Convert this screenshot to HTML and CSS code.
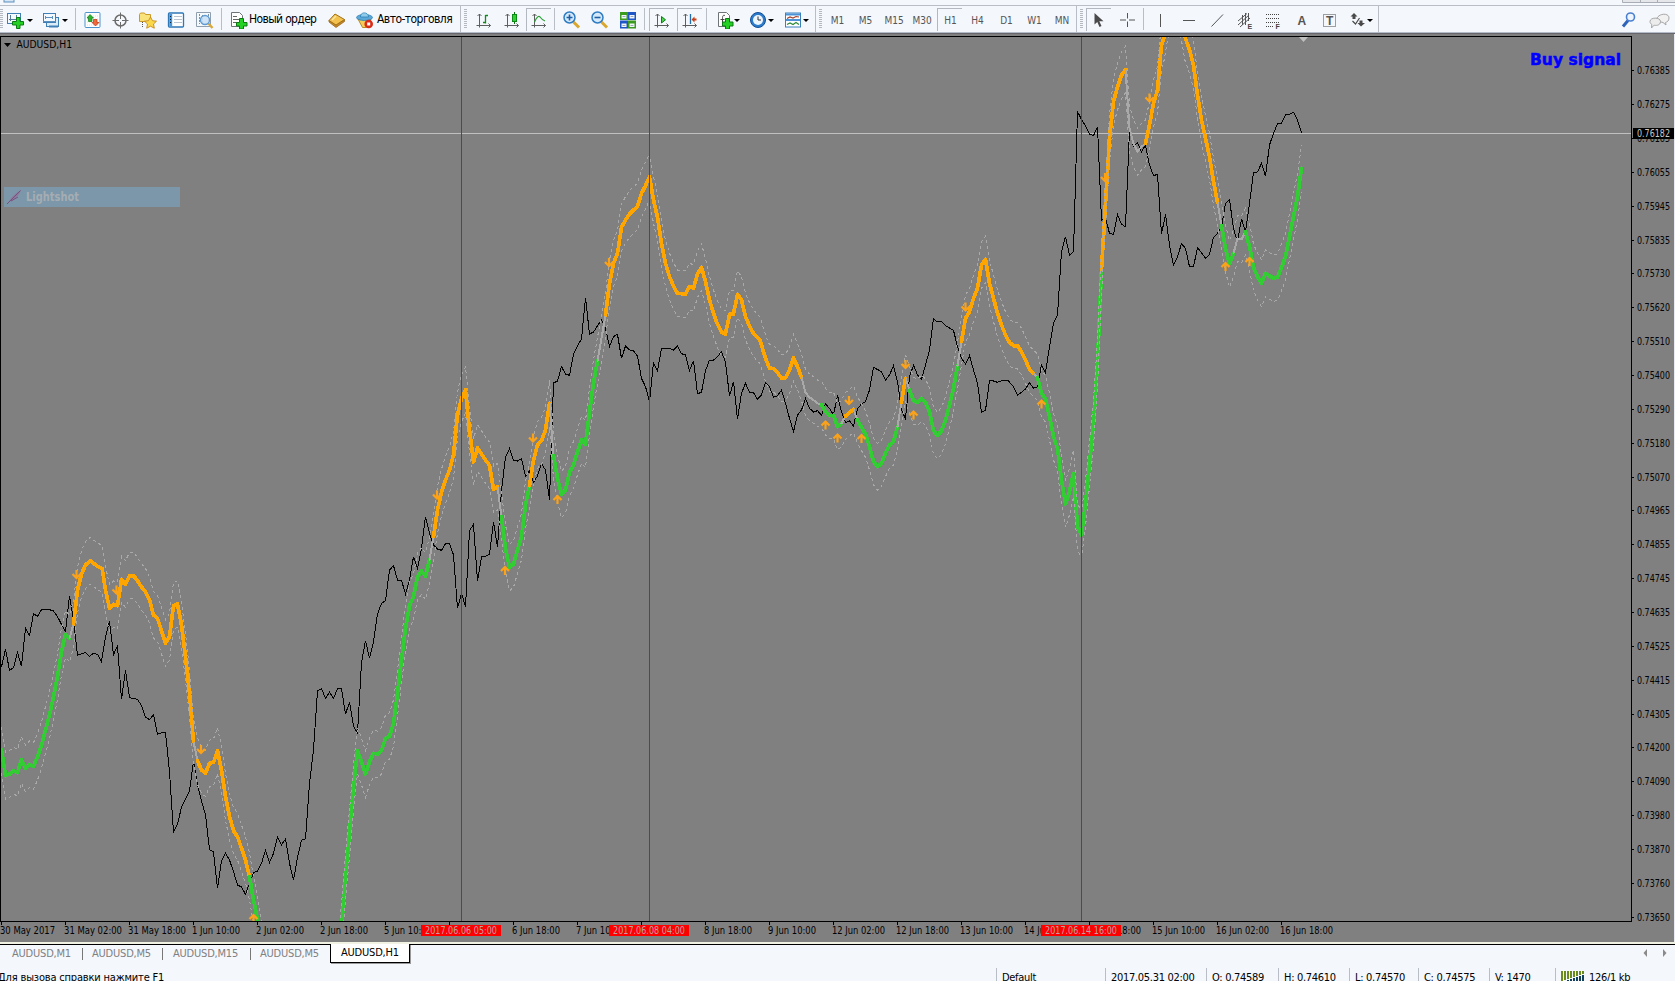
FILE: index.html
```html
<!DOCTYPE html>
<html lang="ru">
<head>
<meta charset="utf-8">
<title>AUDUSD,H1</title>
<link rel="stylesheet" href="styles.css">
</head>
<body>
<div class="app">
  <div class="menu-strip">
    <svg width="20" height="5" viewBox="0 0 20 5"><rect x="4" y="-8" width="10" height="10" fill="#d6e6f4" stroke="#5b8fc0"/></svg>
    <svg class="win-buttons" width="53" height="5" viewBox="0 0 53 5"><path d="M0 0H53V2.5H0Z" fill="#e4e6ea"/><path d="M.5 0V2.5H53M18.500 0V2M35.500 0V2" fill="none" stroke="#a9adb5"/></svg>
  </div>

  <div class="toolbar">
    <span class="grip"></span>
    <svg class="ic m3" viewBox="0 0 18 18"><rect x="1.500" y="2.500" width="13" height="10" fill="#f4f9fd" stroke="#3f7fb5"/><path d="M4.500 4v6M3 8.500h9M10.500 4v4" stroke="#55799a" fill="none"/><path d="M10.500 6.500h3.500v4h3.500v3.500H14v3.500h-3.500v-3.500H6.500v-3.500h4Z" fill="#25d025" stroke="#0c7a14"/></svg>
    <i class="dd m3"></i>
    <svg class="ic m9" viewBox="0 0 18 18"><rect x="4.500" y="6.500" width="12" height="9" fill="#dcebf8" stroke="#3f7fb5"/><path d="M7 15.500h9" stroke="#3f7fb5" stroke-width="2"/><rect x="1.500" y="2.500" width="12" height="9" fill="#f4f9fd" stroke="#3f7fb5"/><path d="M3.500 5v3M3 6.500h8M10.500 5v3M1 10.500h13" stroke="#5a8fbe" fill="none"/></svg>
    <i class="dd m2"></i>
    <i class="sep m7"></i>
    <svg class="ic m8" viewBox="0 0 18 18"><rect x="1" y="1.500" width="15" height="15" rx="1" fill="#fff" stroke="#4e92cc"/><path d="M3 5h11M3 8h11M3 11h11M3 14h11" stroke="#d8dfe6" stroke-dasharray="1 1"/><path d="M6 3.500l3.500 3.500H8v3.500H4.500V7H3Z" fill="#2cb52c" stroke="#0f7a12" stroke-width=".7"/><path d="M11.500 15l-3.500-3.500h1.500v-3h3.500v3H15Z" fill="#f0693a" stroke="#b93212" stroke-width=".7"/></svg>
    <svg class="ic m10" viewBox="0 0 18 18"><circle cx="8.500" cy="9.500" r="5.500" fill="none" stroke="#6c6c6c" stroke-width="1.500"/><path d="M8.500 1.500v6.500M8.500 11v6.500M.5 9.500h6.500M10 9.500h6.500" stroke="#6c6c6c"/></svg>
    <svg class="ic m9" viewBox="0 0 18 18"><path d="M.5 3.500l1-1.500h4l1 1.500h5v7H.5Z" fill="#f9e27a" stroke="#c99a2a"/><path d="M3.500 11v6" stroke="#555" stroke-dasharray="1 1"/><path d="M11.500 6l2 3.700 4 .5-3 2.800.8 4.200-3.800-2-3.800 2 .8-4.200-3-2.800 4-.5Z" fill="#fbd84a" stroke="#c48a1c" stroke-width=".9"/></svg>
    <svg class="ic m10" viewBox="0 0 18 18"><rect x="1.500" y="2" width="15" height="14" rx="1" fill="#fff" stroke="#2f78b8" stroke-width="1.300"/><path d="M3.700 3v12.500" stroke="#4b93d6" stroke-width="3"/><path d="M7 5.500h8M7 8.500h8M7 11.500h8" stroke="#b9c4cf"/><path d="M3 5.500h1M3 8.500h1M3 11.500h1" stroke="#123"/></svg>
    <svg class="ic m11" viewBox="0 0 18 18"><path d="M.5 1.500h14v14H.5Z" fill="#f6f9fc" stroke="#8f9fae"/><path d="M3.500 3v10M6.500 4v9M12.500 3v4" stroke="#7990a6" stroke-dasharray="2 1"/><path d="M12.500 12.500l4 4.500" stroke="#d9a93c" stroke-width="2.500"/><circle cx="9" cy="9" r="4.500" fill="#c9e1f6" fill-opacity=".85" stroke="#5f9bd2" stroke-width="1.400"/></svg>
    <i class="sep m7"></i>
    <svg class="ic m8" viewBox="0 0 18 18"><path d="M1.500 1.500h8l3 3v11h-11Z" fill="#fff" stroke="#6f7478"/><path d="M3 5.500h4M3 8.500h6M3 11.500h4" stroke="#666"/><path d="M9.500 7.500h4v4H17v3.500h-3.500v3h-4v-3H6.500v-3.500h3Z" fill="#25d025" stroke="#0c7a14"/></svg>
    <span class="cmd order m1">Новый ордер</span>
    <svg class="ic m10" viewBox="0 0 18 18"><path d="M1 11l7 5.500 8.500-6v-2L8 14 1 9Z" fill="#c98a22" stroke="#8c5c12" stroke-width=".7"/><path d="M1 9.500L7 3l9.500 5.500L8 14Z" fill="#f3c24e" stroke="#a26f18"/><path d="M4 9l4-4" stroke="#fbe7a4" stroke-width="1.500"/></svg>
    <svg class="ic m10" viewBox="0 0 18 18"><path d="M2 8h13l-4.500 8.500H6.500Z" fill="#f4cd58" stroke="#b98a20"/><ellipse cx="8.500" cy="6.500" rx="8" ry="3" fill="#5ba8d8" stroke="#2f7fb2" stroke-width=".8"/><path d="M4.500 6C4 .5 12.500 .5 12.500 6Z" fill="#8fccec" stroke="#2f7fb2" stroke-width=".8"/><circle cx="12.700" cy="13" r="4.300" fill="#d92b17"/><rect x="11.200" y="11.500" width="3" height="3" fill="#fff"/></svg>
    <span class="cmd auto m3">Авто-торговля</span>
    <i class="sep full m7"></i>
    <span class="grip m3"></span>
    <svg class="ic m9" viewBox="0 0 18 18"><path d="M3.500 3v13.500M.5 14.500h14M1.500 5l2-2 2 2M12.500 12.500l2 2-2 2" fill="none" stroke="#5e5e5e"/><path d="M9.500 4v8.500M7 11.500h2.500M9.500 4.500h2.500" fill="none" stroke="#108a1c" stroke-width="1.300"/></svg>
    <svg class="ic m10" viewBox="0 0 18 18"><path d="M3.500 3v13.500M.5 14.500h14M1.500 5l2-2 2 2M12.500 12.500l2 2-2 2" fill="none" stroke="#5e5e5e"/><path d="M10.500 1v12" stroke="#0b6e14"/><rect x="8.500" y="3.500" width="4" height="7" fill="#2fd02f" stroke="#0b8a17"/></svg>
    <span class="pressed m4"><svg class="ic" viewBox="0 0 18 18"><path d="M3.500 3v13.500M.5 14.500h14M1.500 5l2-2 2 2M12.500 12.500l2 2-2 2" fill="none" stroke="#5e5e5e"/><path d="M3.500 11C6 5 8 4.500 9.500 6.500S12 9.500 14 10" fill="none" stroke="#2aa035" stroke-width="1.200"/></svg></span>
    <i class="sep m3"></i>
    <svg class="ic m8" viewBox="0 0 18 18"><path d="M10.500 11l5.500 5.500" stroke="#d9a62e" stroke-width="3"/><circle cx="6.500" cy="6.500" r="5.500" fill="#d4e9fa" stroke="#2f7cc2" stroke-width="1.500"/><path d="M6.500 3.500v6M3.500 6.500h6" stroke="#1e5fa6" stroke-width="1.600"/></svg>
    <svg class="ic m10" viewBox="0 0 18 18"><path d="M10.500 11l5.500 5.500" stroke="#d9a62e" stroke-width="3"/><circle cx="6.500" cy="6.500" r="5.500" fill="#d4e9fa" stroke="#2f7cc2" stroke-width="1.500"/><path d="M3.500 6.500h6" stroke="#1e5fa6" stroke-width="1.600"/></svg>
    <svg class="ic m10" viewBox="0 0 18 18"><path d="M1 1h8v8H1Z" fill="#3b9b1e"/><path d="M9 1h8v8h-8Z" fill="#1f55c4"/><path d="M1 9.500h8v8h-8Z" fill="#1f55c4"/><path d="M9 9.500h8v8h-8Z" fill="#3b9b1e"/><path d="M2.500 4h5v3.500h-5ZM10.500 4h5v3.500h-5ZM2.500 12.500h5v3.500h-5ZM10.500 12.500h5v3.500h-5Z" fill="#f2f6fb"/><path d="M3.500 5.500h3M11.500 5.500h3M3.500 14.500h3M11.500 14.500h3" stroke="#9ab"/></svg>
    <i class="sep m7"></i>
    <span class="pressed m4"><svg class="ic" viewBox="0 0 18 18"><path d="M3.500 3v13.500M.5 14.500h14M1.500 5l2-2 2 2M12.500 12.500l2 2-2 2" fill="none" stroke="#5e5e5e"/><path d="M7.500 5.500v6.500l4-3.200Z" fill="#4bd44b" stroke="#0b7a17"/></svg></span>
    <span class="pressed m3"><svg class="ic" viewBox="0 0 18 18"><path d="M3.500 3v13.500M.5 14.500h14M1.500 5l2-2 2 2M12.500 12.500l2 2-2 2" fill="none" stroke="#5e5e5e"/><path d="M8.500 3v10" stroke="#1f6fae" stroke-width="1.300"/><path d="M9.500 8.500l3-3v2h2v2h-2v2Z" fill="#c8401a"/></svg></span>
    <i class="sep m4"></i>
    <svg class="ic m10" viewBox="0 0 18 18"><path d="M1.500 1.500h8l3 3v11h-11Z" fill="#fff" stroke="#6f7478"/><path d="M8 4.500C5.500 3.500 5.500 6 5.500 8v5M3.500 8.500h4" fill="none" stroke="#444"/><path d="M8.500 7.500h4v3.500H16v4h-3.500v3h-4v-3H5.500v-4h3Z" fill="#25d025" stroke="#0c7a14"/></svg>
    <i class="dd back"></i>
    <svg class="ic m9" viewBox="0 0 18 18"><circle cx="9" cy="9" r="7.500" fill="#2d7ccc" stroke="#134f96"/><circle cx="9" cy="9" r="5" fill="#eef6fd"/><path d="M9 5.500v3.500h3" fill="none" stroke="#333"/></svg>
    <i class="dd m1"></i>
    <svg class="ic m10" viewBox="0 0 18 18"><rect x="1.500" y="2" width="15" height="14" fill="#fff" stroke="#3a80bd"/><path d="M2 3.500h14M2 9h14" stroke="#4b93d6" stroke-width="2"/><path d="M3 7.500l3-1.500 3 1 3-1.500 3 .5" fill="none" stroke="#a3402c" stroke-width="1.200"/><path d="M3 13.500l3-1.500 3 1.500 3-2 3 2" fill="none" stroke="#2a8a35" stroke-width="1.200"/></svg>
    <i class="dd m1"></i>
    <i class="sep full m6"></i>
    <span class="grip m3"></span>
    <span class="tf m1">M1</span><span class="tf">M5</span><span class="tf tf-29">M15</span><span class="tf tf-27">M30</span><span class="pressed tf-on m2">H1</span><span class="tf m1">H4</span><span class="tf m1">D1</span><span class="tf">W1</span><span class="tf tf-27">MN</span>
    <i class="sep full m1"></i>
    <span class="grip m3"></span>
    <span class="pressed m3"><svg class="ic" viewBox="0 0 18 18"><path d="M3.500 2v11.500l2.800-2.500 2.200 5 2-1-2.200-4.700h4.200Z" fill="#4a4a4a"/></svg></span>
    <svg class="ic m8" viewBox="0 0 18 18"><path d="M8.500 2v5.500M8.500 10.500V16M1 9h6M10 9h6" stroke="#555"/></svg>
    <i class="sep m6"></i>
    <svg class="ic m9" viewBox="0 0 18 18"><path d="M7.500 3v13" stroke="#555"/></svg>
    <svg class="ic m10" viewBox="0 0 18 18"><path d="M2 9.500h12" stroke="#555"/></svg>
    <svg class="ic m10" viewBox="0 0 18 18"><path d="M2.500 15.500L14 3.500" stroke="#555"/></svg>
    <svg class="ic m10" viewBox="0 0 18 18"><path d="M1 14L12 4M1 10L10 2.500M3 16L13 7M5.500 4v10M8.500 2v12M11.500 2v8" stroke="#555"/><text x="10.500" y="18" class="tiny">E</text></svg>
    <svg class="ic m10" viewBox="0 0 18 18"><path d="M1 3.500h13M1 7.500h13M1 11.500h13M1 15.500h8" stroke="#444" stroke-dasharray="1 1"/><text x="10.500" y="18" class="tiny">F</text></svg>
    <svg class="ic m10" viewBox="0 0 18 18"><text x="4.500" y="14" class="glyph">A</text></svg>
    <svg class="ic m10" viewBox="0 0 18 18"><rect x="2.500" y="3.500" width="12" height="12" fill="none" stroke="#444" stroke-dasharray="1 1"/><text x="5" y="14" class="glyph">T</text></svg>
    <svg class="ic m10" viewBox="0 0 18 18"><path d="M5 2l3.500 3.500H6.500V8H3.500V5.500H1.500ZM12 15.500l-3.500-3.500h2V9.500h3v2.500h2.500Z" fill="#4a4a4a"/><path d="M3.500 10l3 3 4-6" fill="none" stroke="#4a4a4a" stroke-width="1.200"/></svg>
    <i class="dd"></i>
    <i class="sep full m5"></i>
    <svg class="ic push" viewBox="0 0 18 18"><path d="M8 9.500l-5 6" stroke="#2d63b8" stroke-width="3"/><circle cx="10.500" cy="6" r="4" fill="#eef5fc" stroke="#4a7fd0" stroke-width="1.600"/></svg>
    <svg class="chat m11" viewBox="0 0 21 18"><path d="M8 10C6 3 20 .5 20 7c0 3-2 4-3.500 4.500L17 14l-3-2.500Z" fill="#f1f1f1" stroke="#a6a6a6"/><path d="M1 10.500C1 6 11.500 6 11.500 10.500S6 14.500 5 14.200L2.500 17l.3-3.500C1.500 12.500 1 12 1 10.500Z" fill="#ececec" stroke="#a6a6a6"/></svg>
  </div>

  <svg class="chart" id="chart" viewBox="0 33 1675 909" width="1675" height="909"></svg>

  <div class="tabs">
    <span class="tab t1">AUDUSD,M1</span><span class="tab t2">AUDUSD,M5</span><span class="tab t3">AUDUSD,M15</span><span class="tab t4">AUDUSD,M5</span><span class="tab on">AUDUSD,H1</span>
    <svg class="tab-nav" viewBox="0 0 26 10"><path d="M4 1v8L.5 5ZM20 1v8l3.500-4Z" fill="#8a8a8a"/></svg>
  </div>

  <div class="status">
    <span class="help">Для вызова справки нажмите F1</span>
    <span class="cell c1">Default</span>
    <span class="cell c2">2017.05.31 02:00</span>
    <span class="cell c3">O: 0.74589</span>
    <span class="cell c4">H: 0.74610</span>
    <span class="cell c5">L: 0.74570</span>
    <span class="cell c6">C: 0.74575</span>
    <span class="cell c7">V: 1470</span>
    <span class="cell c8"><svg width="24" height="12" viewBox="0 0 24 12"><path d="M0 0h2v10H0ZM3 0h2v9H3ZM6 0h2v8H6ZM9 0h2v7H9ZM12 0h2v6h-2ZM15 0h2v5h-2ZM18 0h2v4h-2ZM21 0h2v3h-2Z" fill="#6a8a1c"/><path d="M0 11h2v1H0ZM3 10h2v2H3ZM6 9h2v3H6ZM9 8h2v4H9ZM12 7h2v5h-2ZM15 6h2v6h-2ZM18 5h2v7h-2ZM21 4h2v8h-2Z" fill="#123f5c"/></svg><b class="kb">126/1 kb</b></span>
  </div>
</div>
<script src="chart.js"></script>
</body>
</html>
```

FILE: styles.css
```css
* { box-sizing: border-box; }
body { margin: 0; background: #f4f7fc; font-family: "DejaVu Sans Condensed", "DejaVu Sans", sans-serif; font-stretch: condensed; overflow: hidden; }
.app { width: 1675px; height: 981px; display: flex; flex-direction: column; overflow: hidden; }
.menu-strip { height: 6px; flex: none; display: flex; justify-content: space-between; background: #f4f7fc; border-bottom: 1px solid #b9bdc6; }
.menu-strip svg { display: block; }
.toolbar { height: 27px; flex: none; display: flex; align-items: center; background: #f4f7fc; border-bottom: 1px solid #b4bac8; }
.toolbar > * { flex: none; }
.ic { width: 18px; height: 18px; display: block; margin-top: 1px; }
.chat { width: 21px; height: 18px; margin-right: 5px; margin-top: 1px; }
.grip { width: 3px; height: 20px; background: repeating-linear-gradient(to bottom, #b4b8c0 0 1px, transparent 1px 2px); }
.sep { width: 1px; height: 22px; background: #b9bdc6; }
.sep.full { height: 26px; }
.dd { width: 6px; height: 3px; margin-top: 2px; border: 3px solid transparent; border-top-color: #000; border-bottom: 0; }
.dd.back { margin-left: -1px; }
.pressed { width: 25px; height: 23px; padding-left: 2px; border-left: 1px solid #b3b7c0; border-top: 1px solid #b3b7c0; display: flex; align-items: center; justify-content: center; }
.pressed .ic { margin-top: 0; }
.cmd { font-size: 12px; line-height: 16px; height: 17px; white-space: nowrap; color: #000; }
.order { width: 69px; letter-spacing: -0.65px; }
.auto { width: 76px; letter-spacing: -0.55px; }
.tf { width: 28px; padding: 2px 0 0 1px; text-align: center; font-size: 10px; color: #555; }
.tf-29 { width: 29px; }
.tf-27 { width: 27px; }
.tf-on { padding: 1px 0 0 1px; font-size: 10px; color: #555; }
.tiny { font: bold 7px "Liberation Sans", sans-serif; fill: #444; }
.glyph { font: bold 12px "Liberation Sans", sans-serif; fill: #555; }
.push { margin-left: auto; }
.m1 { margin-left: 1px; } .m2 { margin-left: 2px; } .m3 { margin-left: 3px; }
.m4 { margin-left: 4px; } .m5 { margin-left: 5px; } .m6 { margin-left: 6px; }
.m7 { margin-left: 7px; } .m8 { margin-left: 8px; } .m9 { margin-left: 9px; }
.m10 { margin-left: 10px; } .m11 { margin-left: 11px; }

.chart { flex: none; display: block; background: #808080; }
.crisp { shape-rendering: crispEdges; }
.price { fill: none; stroke: #000; stroke-width: 1; }
.band { fill: none; stroke: #a9a9a9; stroke-width: 1; stroke-dasharray: 3 3; }
.ma { fill: none; stroke-width: 3.7; stroke-linejoin: round; stroke-linecap: round; }
.ma-g { stroke: #32cd32; } .ma-o { stroke: #ffa500; } .ma-n { stroke: #a9a9a9; stroke-width: 2; }
.arrow { fill: none; stroke: #fba218; stroke-width: 2.2; }
.event { stroke: #f00; }
.bid { stroke: #c0c0c0; }
.frame { fill: none; stroke: #000; }
.axis { font-size: 10px; fill: #000; }
.tag { fill: #c0a0a0; }
.bid-tag { fill: #c8c8c8; }
.title { font-size: 10px; fill: #000; }
.signal { font: bold 16px "DejaVu Sans", sans-serif; fill: #00f; stroke: #00f; stroke-width: .5; }
.shot { font: bold 12px "DejaVu Sans Condensed", sans-serif; fill: #a5adb3; }

.tabs { height: 26px; flex: none; display: flex; background: linear-gradient(#f1f1e4 0 2px, #000 2px 3px, #f4f7fc 3px); font-size: 11px; color: #808080; }
.tab { height: 12px; margin-top: 6px; line-height: 12px; border-right: 1px solid #777; white-space: nowrap; letter-spacing: -0.2px; }
.t1 { width: 83px; padding-left: 12px; }
.t2 { width: 80px; padding-left: 9px; }
.t3 { width: 88px; padding-left: 10px; }
.t4 { width: 80px; padding-left: 9px; border-right: 0; }
.tab.on { width: 80px; height: 19px; margin: 2px 0 0 -1px; line-height: 18px; padding-left: 10px; background: #fff; color: #000; border: 1px solid #000; border-top: 0; box-shadow: 1px 1px 0 #999; }
.tab-nav { width: 26px; height: 10px; margin: 6px 6px 0 auto; }

.status { height: 13px; flex: none; display: flex; overflow: hidden; font-size: 11px; line-height: 13px; white-space: nowrap; color: #000; }
.status > * { flex: none; }
.help { width: 996px; text-indent: -2px; padding-top: 3px; letter-spacing: -0.17px; }
.cell { border-left: 1px solid #b9bdc6; padding: 3px 0 0 5px; letter-spacing: -0.3px; }
.c1 { width: 109px; } .c2 { width: 101px; } .c3 { width: 72px; } .c4 { width: 71px; }
.c5 { width: 69px; } .c6 { width: 71px; } .c7 { width: 66px; } .c8 { display: flex; gap: 4px; }
.kb { font-weight: normal; }
```

FILE: chart.js
```js
// Series are stored in blocks: [origin x, origin y, "x,y x,y ..."], with offsets in thirds of a pixel.
const NS = 'http://www.w3.org/2000/svg';
const root = document.getElementById('chart');

function add(name, attrs, text, parent) {
  const el = document.createElementNS(NS, name);
  for (const k in attrs) el.setAttribute(k, attrs[k]);
  if (text) el.textContent = text;
  (parent || root).appendChild(el);
  return el;
}
function px(ox, oy, list) {
  return list.trim().split(/\s+/).map(p => {
    const [x, y] = p.split(',').map(Number);
    return [ox + x / 3 + 0.17, oy + y / 3];
  });
}
const str = pts => pts.map(p => p[0].toFixed(2) + ',' + p[1].toFixed(2)).join(' ');

const price = [
  [0, 500, `4,500 16,448 28,511 40,503 52,457 64,499 76,385 88,406 100,341 112,349 124,329 148,329 160,333 172,350 196,396
   208,288 220,360 232,465 256,458 268,469 280,460 292,463 304,485 316,410 328,364 340,464 352,438 364,598 376,511 388,593
   412,598 424,617 436,651 448,659 460,644 472,703 484,698 496,698 508,815 520,997 532,972 544,922 568,873 580,784 592,855
   604,903 616,945 628,1049 640,1056 652,1165 664,1083 676,1060 688,1080 700,1115 712,1155 724,1161 736,1183 748,1150
   760,1118 772,1113 784,1090 796,1051 808,1087 820,1060 832,1012 844,1034 856,1017 868,1090 880,1141 892,1072 904,1021
   916,1016 928,850 940,750 952,573 964,566 976,595 988,577 1000,595 1012,566 1024,566 1036,642 1048,607 1060,678 1072,700
   1084,487`],
  [340, 340, `76,902 88,955 100,905 112,822 124,790 136,782 148,690 160,677 172,720 184,721 196,762 208,720 220,650 232,685
   244,625 256,530 268,580 280,615 292,627 304,631 316,611 328,610 340,645 352,805 364,760 376,800 388,572 400,553 412,724
   424,650 436,649 448,642 460,545 472,622 484,450 496,352 508,326 520,360 532,363 544,356 556,409 568,393 580,427 592,408
   604,371 616,390 628,479 640,128 652,124`],
  [560, 130, `4,710 16,732 28,736 40,673 52,648 64,627 76,503 88,612 100,606 124,569 136,595 148,649 160,620 172,613 184,685
   196,648 208,660 220,662 232,678 244,745 256,770 268,815 280,698 292,722 304,655 328,655 340,660 352,648 364,671 376,675
   388,722 400,692 412,791 424,787 436,722 448,690 460,690 472,680 484,665 496,697 508,798 520,755 532,868 544,790 556,760
   568,787 580,788 592,808 604,795 616,758 628,770 640,802 652,797 664,780 676,820 688,865 700,905 712,855 724,840 736,806
   748,835 760,846 772,842 784,856 796,822 808,835 820,855 832,796 844,845 856,878 868,872 880,888 892,836 904,822 916,815
   928,780`],
  [780, 230, `280,412 304,425 316,451 328,435 340,407 352,455 364,540 376,566 388,440 400,406 412,435 424,448 436,405 448,360
   460,266 472,276 484,275 496,287 520,301 532,350 544,385 556,402 568,377 580,420 592,460 604,547 616,541 628,452 640,453
   652,457 664,452 684,452 700,470 712,496 724,487 736,477 748,458 760,475 772,470 784,404 796,428 808,350 820,278`],
  [1020, 30, `112,855 124,665 136,620 148,676 160,665 172,245 184,268 196,288 208,312 220,317 232,290 244,570 256,563 268,610
   280,613 292,554 304,583 316,590 328,300 340,350 352,338 364,366 376,345 388,405 400,437 412,433 424,612 436,553 448,645
   460,706 472,680 484,641 496,655 508,710 520,710 532,653 544,668 556,685 568,673 580,622 592,610 604,590 616,520 628,509
   640,595 652,637 664,566 676,606 688,520 700,427 712,426 724,400 736,438 748,345 760,310 772,281 784,280 796,254 808,253
   820,247 832,270 844,308`]
];

// g = rising, o = falling, n = neutral; each run begins where the previous one ended.
const average = [
  ['g', 0, 500, `4,750 16,827 28,822 40,812 52,818 64,780 76,805 88,793 100,798 112,770 124,735 136,690 148,645 160,590 172,530 184,455 196,403 208,415`],
  ['n', 0, 500, `220,372`],
  ['o', 0, 500, `232,270 244,222 256,195 270,182 292,199 306,206 316,270 328,324 340,313 352,317 364,238 376,252 388,227 400,227 412,242 424,261 436,275
   448,300 460,345 472,355 484,392 496,429 508,410 520,317 532,312 544,375 556,470 568,580 580,725`],
  ['n', 0, 500, `592,783`],
  ['o', 0, 500, `604,810 616,820 628,790 640,787 652,752 664,810 676,890 688,950 700,992 712,1010 724,1045 736,1080 748,1130`],
  ['g', 0, 500, `760,1200 772,1258 784,1330 900,1900 1012,1400 1026,1258 1036,1130 1048,1000 1060,860 1072,752 1084,785 1096,822 1108,785 1120,760
   1132,763 1144,752 1156,715 1168,708 1180,670 1192,580`],
  ['g', 340, 340, `184,960 196,865 208,797 220,770 232,710 244,693 256,708 268,660`],
  ['n', 340, 340, `280,590`],
  ['o', 340, 340, `292,510 304,457 316,420 328,390 340,345 352,225 364,175 376,150 388,270 400,366 412,324 424,342 436,360 448,376 460,448 472,440`],
  ['n', 340, 340, `484,530`],
  ['g', 340, 340, `496,625 508,683 520,672 532,630 544,590 556,495 568,437`],
  ['o', 340, 340, `580,360 592,315 604,302 616,270 628,190`],
  ['n', 340, 340, `640,347`],
  ['g', 340, 340, `652,415 664,463 676,450 688,397 700,375 712,335`],
  ['g', 560, 130, `64,930 76,942 88,845 100,760 112,692`],
  ['n', 560, 130, `124,625 136,555`],
  ['o', 560, 130, `148,460 160,400 172,370 184,292 196,270 208,252 220,240 232,230 244,190 256,167 268,140 280,210 292,262 304,340 316,400 328,440 340,468
   352,490 376,492 388,470 400,474 412,432 424,412 436,455 448,510 460,550 472,583 484,607 496,612 508,553 520,552 532,493 544,510 556,560
   568,588 580,610 600,632 616,685 628,714 640,716 652,728 664,744 676,743 688,720 700,683 712,710 724,742`],
  ['n', 560, 130, `736,788 748,802 760,810 772,820 784,824`],
  ['g', 560, 130, `796,845 808,857 820,856 832,890 844,880`],
  ['n', 560, 130, `856,858`],
  ['o', 560, 130, `868,848 880,838`],
  ['n', 560, 130, `892,870`],
  ['g', 780, 230, `244,592 256,612 268,650 280,695 292,710 304,700 316,670 328,645 340,635 352,590`],
  ['n', 780, 230, `364,517`],
  ['o', 780, 230, `376,445`],
  ['n', 780, 230, `388,480`],
  ['g', 780, 230, `400,512 412,517 424,505 436,517 448,545 460,602 472,616 484,603 496,570 508,525 520,475 532,407`],
  ['n', 780, 230, `544,335`],
  ['o', 780, 230, `556,265 568,245 580,205 592,175 604,105 616,88 628,160 640,205 652,250 664,285 676,315 688,337 700,347 712,347 724,365 736,390 748,418 760,430`],
  ['n', 780, 230, `772,442`],
  ['g', 780, 230, `784,490 796,507 808,560 820,620 832,655 844,750 856,822 868,785 880,730 892,890 904,915 916,820 928,700 940,580 952,400 964,118`],
  ['o', 1020, 30, `256,520 268,325 280,215 292,170 304,136 316,119`],
  ['n', 1020, 30, `328,295 340,340 352,365 364,350 376,340`],
  ['o', 1020, 30, `388,285 400,220 412,180 424,45 432,20 444,-50 460,-90 482,-50 494,20 508,60 520,105 532,195 544,270 556,325 568,380 580,455 592,517`],
  ['n', 1020, 30, `604,588`],
  ['g', 1020, 30, `616,655 628,702 640,670`],
  ['n', 1020, 30, `652,625 664,628 676,605`],
  ['g', 1020, 30, `688,650 700,712 712,740 724,760 736,730 748,738 760,744 772,742 784,712 796,680 808,620 820,560 832,500 844,415`]
];

const defs = add('defs', {});
const clip = add('clipPath', { id: 'plot' }, null, defs);
add('rect', { x: 1, y: 37, width: 1630, height: 884 }, null, clip);

add('rect', { x: 0, y: 33, width: 1675, height: 1, fill: '#66666c' });
add('rect', { x: 1674, y: 34, width: 1, height: 908, fill: '#e8ecf2' });

const plot = add('g', { 'clip-path': 'url(#plot)', class: 'crisp' });
add('path', { class: 'bid', d: 'M1 133.5H1631' }, null, plot);
add('polyline', { class: 'price', points: str(price.flatMap(b => px(...b))) }, null, plot);

let all = [];
const runs = [];
for (const [kind, ox, oy, list] of average) {
  const pts = px(ox, oy, list);
  runs.push([kind, all.length ? [all[all.length - 1], ...pts] : pts]);
  all = all.concat(pts);
}
for (const [kind, run] of runs) {
  add('polyline', { class: 'ma ma-' + kind, points: str(run) }, null, plot);
}
for (const d of [-23.3, 23.3]) {
  add('polyline', { class: 'band', points: str(all.map(p => [p[0], p[1] + d])) }, null, plot);
}

const down = [[76.5, 574.5], [116.5, 590], [201, 749.5], [437, 495], [533, 438], [609, 262.5], [849, 400.5], [905.5, 364.5],
  [965.5, 307], [1105, 177.5], [1149.5, 98]];
const up = [[253.5, 918.5], [505, 570.5], [557.5, 499.5], [825.5, 425], [837.5, 438], [861.5, 438.5], [913.5, 415],
  [1041.5, 404], [1225.5, 266.5], [1249.5, 261.5]];
const marks = add('g', { 'clip-path': 'url(#plot)' });
for (const [x, y] of down) add('path', { class: 'arrow', d: `M${x} ${y - 4.5}v8M${x - 4} ${y - .5}l4 4l4 -4` }, null, marks);
for (const [x, y] of up) add('path', { class: 'arrow', d: `M${x} ${y + 4.5}v-8M${x - 4} ${y + .5}l4 -4l4 4` }, null, marks);

for (const x of [461.5, 649.5, 1081.5]) add('path', { class: 'event crisp', d: `M${x} 37V921` });
add('path', { class: 'frame crisp', d: 'M.5 921V36.5H1631.5V921.5H0' });
add('path', { d: 'M1299 37h9l-4.500 5Z', fill: '#c0c0c0' });

// Price scale: 0.3098px per point.
const levels = [76385, 76275, 76165, 76055, 75945, 75835, 75730, 75620, 75510, 75400, 75290, 75180, 75070, 74965, 74855, 74745,
  74635, 74525, 74415, 74305, 74200, 74090, 73980, 73870, 73760, 73650];
for (const v of levels) {
  const y = Math.round(70 + (76385 - v) * 0.3098);
  add('path', { class: 'frame crisp', d: `M1632 ${y + .5}h2` });
  add('text', { class: 'axis', x: 1637, y: y + 4, textLength: 33, lengthAdjust: 'spacingAndGlyphs' }, '0.' + v);
}
add('rect', { x: 1633, y: 128, width: 41, height: 11, fill: '#000' });
add('text', { class: 'axis bid-tag', x: 1637, y: 137, textLength: 33, lengthAdjust: 'spacingAndGlyphs' }, '0.76182');

// Time scale: one tick every 16 bars; empty labels lie fully behind an event tag.
const dates = ['30 May 2017', '31 May 02:00', '31 May 18:00', '1 Jun 10:00', '2 Jun 02:00', '2 Jun 18:00', '5 Jun 10:00',
  '', '6 Jun 18:00', '7 Jun 10:00', '', '8 Jun 18:00', '9 Jun 10:00', '12 Jun 02:00', '12 Jun 18:00',
  '13 Jun 10:00', '14 Jun 02:00', '14 Jun 18:00', '15 Jun 10:00', '16 Jun 02:00', '16 Jun 18:00'];
dates.forEach((t, i) => {
  const x = 1 + 64 * i;
  const w = t.includes('May') ? (i ? 58 : 55) : t.length === 11 ? 48 : 53;
  add('path', { class: 'frame crisp', d: `M${x + .5} 922v3` });
  if (t) add('text', { class: 'axis', x: x - 1, y: 934, textLength: w, lengthAdjust: 'spacingAndGlyphs' }, t);
});
[[421, '2017.06.06 05:00'], [609, '2017.06.08 04:00'], [1041, '2017.06.14 16:00']].forEach(([x, t]) => {
  add('rect', { x: x, y: 925, width: 80, height: 11, fill: '#f00' });
  add('text', { class: 'axis tag', x: x + 4, y: 934, textLength: 72, lengthAdjust: 'spacingAndGlyphs' }, t);
});

add('path', { d: 'M4 43h7l-3.500 4Z' });
add('text', { class: 'title', x: 16.5, y: 48, textLength: 55.5, lengthAdjust: 'spacingAndGlyphs' }, 'AUDUSD,H1');
add('text', { class: 'signal', x: 1530, y: 65, textLength: 91, lengthAdjust: 'spacingAndGlyphs' }, 'Buy signal');

add('rect', { x: 4, y: 187, width: 176, height: 20, fill: '#7b97a9' });
add('path', { d: 'M7 204L10.500 199Q14 194 21 190Q19 197 10.500 201Z', fill: '#8c7a9c' });
add('path', { d: 'M7 204L20.500 190.500M11 201L18 197', fill: 'none', stroke: '#7d4f80' });
add('text', { class: 'shot', x: 26, y: 201, textLength: 53, lengthAdjust: 'spacingAndGlyphs' }, 'Lightshot');
```
